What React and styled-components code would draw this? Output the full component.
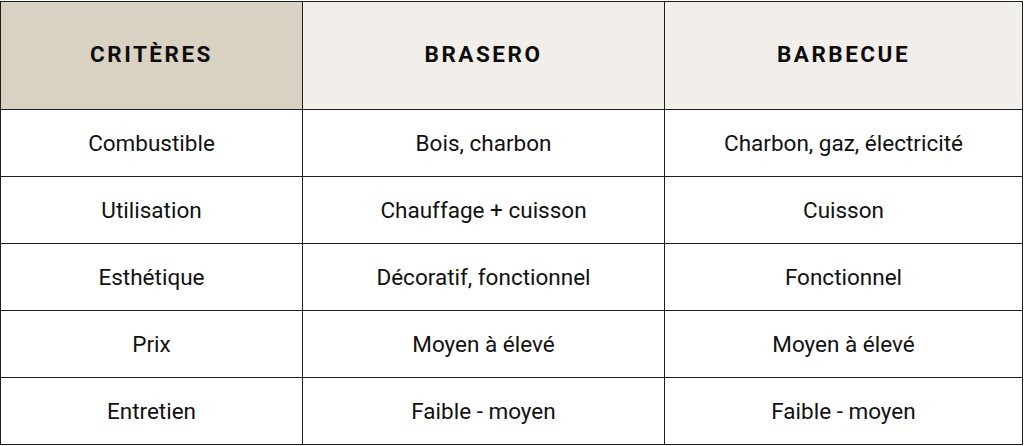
import React from "react";
import styled, { createGlobalStyle } from "styled-components";

const GlobalStyle = createGlobalStyle`
  body {
    margin: 0;
    background: #ffffff;
    font-family: Roboto, "Liberation Sans", sans-serif;
    color: #111111;
  }
`;

const Wrap = styled.div`
  padding-top: 1px;
`;

const Table = styled.table`
  width: 1022px;
  border-collapse: collapse;
  table-layout: fixed;
`;

const HeadCell = styled.th`
  height: 104px;
  padding: 0 0 3px;
  border: 1.5px solid #1e1e1e;
  background: ${(p) => (p.$first ? "#d9d1c1" : "#f2eeea")};
  font-size: 22.5px;
  font-weight: 700;
  letter-spacing: 2.5px;
  text-transform: uppercase;
  text-align: center;
  vertical-align: middle;
  color: #0d0d0d;
`;

const Cell = styled.td`
  height: 65px;
  padding: 0 0 1px;
  border: 1.5px solid #1e1e1e;
  font-size: 22.5px;
  font-weight: 400;
  text-align: center;
  vertical-align: middle;
`;

const rows = [
  ["Combustible", "Bois, charbon", "Charbon, gaz, électricité"],
  ["Utilisation", "Chauffage + cuisson", "Cuisson"],
  ["Esthétique", "Décoratif, fonctionnel", "Fonctionnel"],
  ["Prix", "Moyen à élevé", "Moyen à élevé"],
  ["Entretien", "Faible - moyen", "Faible - moyen"],
];

export default function App() {
  return (
    <Wrap>
      <GlobalStyle />
      <Table>
        <colgroup>
          <col style={{ width: 302 }} />
          <col style={{ width: 362 }} />
          <col style={{ width: 358 }} />
        </colgroup>
        <thead>
          <tr>
            <HeadCell $first>Critères</HeadCell>
            <HeadCell>Brasero</HeadCell>
            <HeadCell>Barbecue</HeadCell>
          </tr>
        </thead>
        <tbody>
          {rows.map((r) => (
            <tr key={r[0]}>
              {r.map((c, i) => (
                <Cell key={i}>{c}</Cell>
              ))}
            </tr>
          ))}
        </tbody>
      </Table>
    </Wrap>
  );
}
